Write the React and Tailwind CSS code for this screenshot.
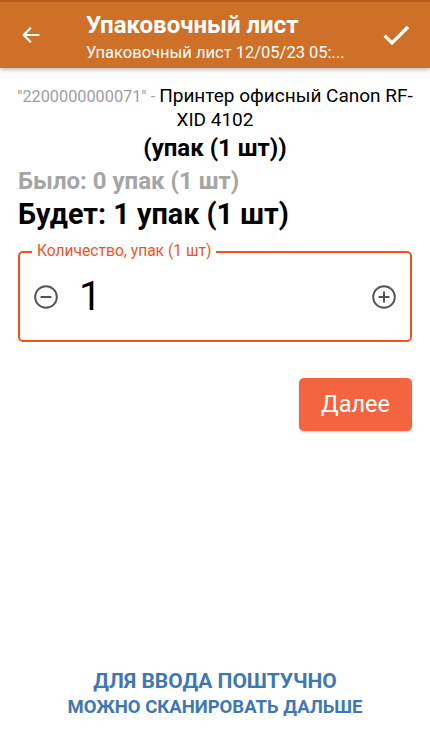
import { useState } from "react";

function MinusCircle() {
  return (
    <svg width="26" height="26" viewBox="0 0 24 24" fill="none" stroke="#555" strokeWidth="1.8">
      <circle cx="12" cy="12" r="10" />
      <path d="M7 12h10" />
    </svg>
  );
}

function PlusCircle() {
  return (
    <svg width="26" height="26" viewBox="0 0 24 24" fill="none" stroke="#555" strokeWidth="1.8">
      <circle cx="12" cy="12" r="10" />
      <path d="M7 12h10M12 7v10" />
    </svg>
  );
}

export default function App() {
  const [qty, setQty] = useState(1);

  return (
    <div className="w-[430px] h-[740px] bg-white flex flex-col font-['Roboto',sans-serif] overflow-hidden">
      {/* toolbar */}
      <div className="relative z-10 h-[68px] bg-[#cf7029] border-t-2 border-[#b35a1c] shadow-[0_2px_4px_rgba(0,0,0,0.25)] flex items-center">
        <button className="w-[64px] h-full flex items-center justify-center pr-[2px]">
          <svg width="22" height="22" viewBox="0 0 24 24" fill="none" stroke="white" strokeWidth="2.4" strokeLinecap="square">
            <path d="M20 12H5M11 5l-7 7 7 7" />
          </svg>
        </button>
        <div className="flex-1 pl-[22px] text-white leading-none">
          <div className="text-[24px] font-bold mt-[5px]">Упаковочный лист</div>
          <div className="text-[16.5px] mt-[8px]">Упаковочный лист 12/05/23 05:...</div>
        </div>
        <button className="w-[64px] h-full flex items-center justify-center pr-[4px]">
          <svg width="32" height="32" viewBox="0 0 24 24" fill="none" stroke="white" strokeWidth="2.5">
            <path d="M3.5 12.5l5.5 5.5L21 6" />
          </svg>
        </button>
      </div>

      <div className="flex-1 flex flex-col px-[18px]">
        <p className="-mx-[4px] mt-[16px] text-center text-[19px] leading-[23px] text-black">
          <span className="text-[16.3px] text-[#9e9e9e]">"2200000000071" - </span>Принтер офисный Canon RF-XID 4102
        </p>
        <p className="text-center text-[24px] font-bold leading-[28px] mt-[3px] text-black">(упак (1 шт))</p>
        <p className="text-[24px] font-bold leading-[28px] mt-[5px] text-[#a5a5a5]">Было: 0 упак (1 шт)</p>
        <p className="text-[28.8px] font-bold leading-[32px] mt-[3px] text-black">Будет: {qty} упак (1 шт)</p>

        <div className="relative mt-[21px] h-[91px] border-2 border-[#f4511e] rounded-[5px] flex items-center px-[13px]">
          <span className="absolute left-[12px] top-[-11px] bg-white px-[5px] text-[15.6px] leading-[18px] text-[#f4511e]">
            Количество, упак (1 шт)
          </span>
          <button onClick={() => setQty(Math.max(0, qty - 1))} className="flex items-center">
            <MinusCircle />
          </button>
          <span className="ml-[20px] text-[40px] leading-none text-black">{qty}</span>
          <button onClick={() => setQty(qty + 1)} className="ml-auto flex items-center">
            <PlusCircle />
          </button>
        </div>

        <div className="flex justify-end mt-[36px]">
          <button className="w-[113px] h-[53px] bg-[#f46440] rounded-[5px] text-white text-[23.5px] shadow-[0_1px_2px_rgba(0,0,0,0.2)]">
            Далее
          </button>
        </div>

        <div className="mt-auto mb-[22px] text-center font-bold text-[#3e78b4] uppercase">
          <div className="text-[21px] leading-[24px]">Для ввода поштучно</div>
          <div className="text-[18.5px] leading-[22px] mt-[3px]">Можно сканировать дальше</div>
        </div>
      </div>
    </div>
  );
}
